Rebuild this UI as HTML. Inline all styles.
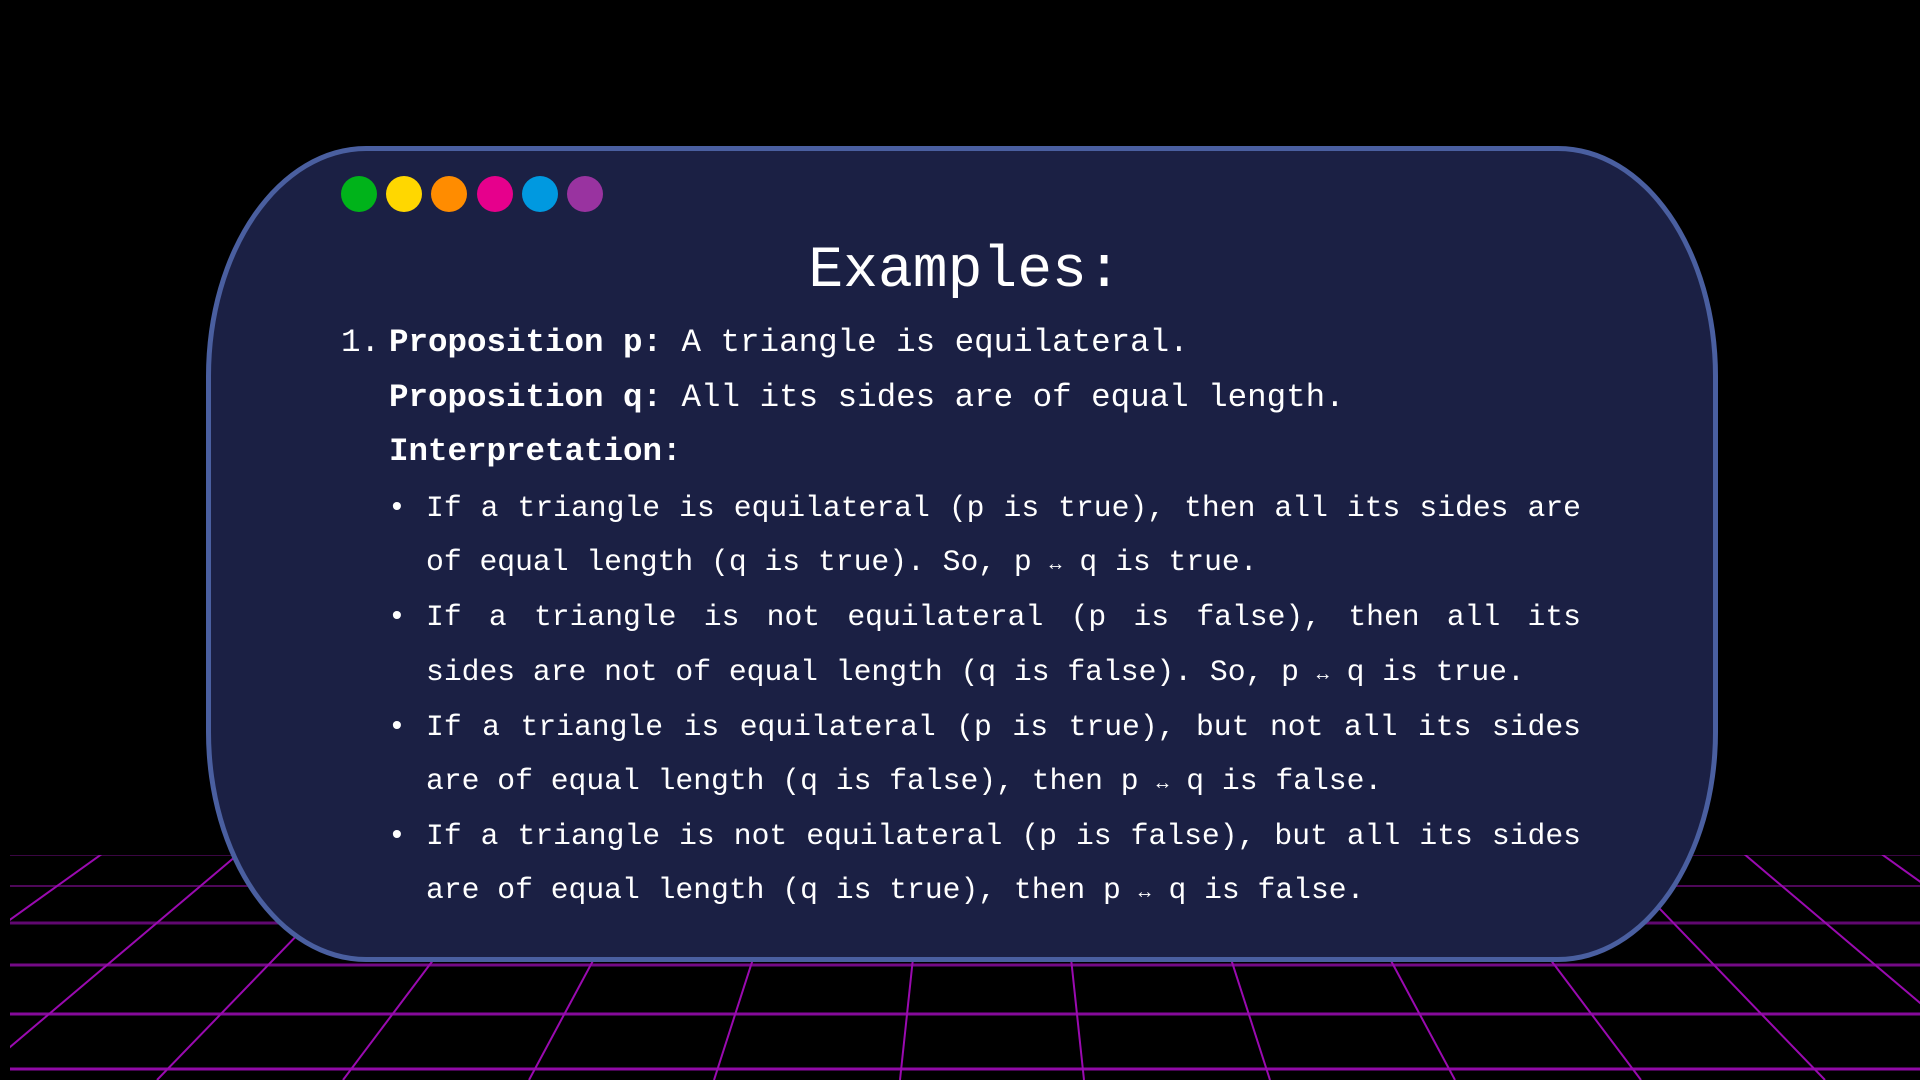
<!DOCTYPE html>
<html><head><meta charset="utf-8"><style>
html,body{margin:0;padding:0;background:#000;width:1920px;height:1080px;overflow:hidden;position:relative;font-family:"Liberation Mono","DejaVu Sans Mono",monospace;color:#fff}
svg.grid{position:absolute;left:0;top:0}
.card{position:absolute;left:206px;top:146px;width:1502px;height:806px;background:#1b2044;border:5px solid #4a5fa0;border-radius:160px/230px}
.dot{position:absolute;top:176px;width:36px;height:36px;border-radius:50%}
.title{position:absolute;left:0;width:1930px;text-align:center;top:243px;font-size:58px;line-height:58px}
.l{position:absolute;white-space:pre;font-size:32.5px;line-height:54.6px}
.b{position:absolute;font-size:29.7px;line-height:54.6px;white-space:nowrap}
.j{width:1155px;text-align:justify;text-align-last:justify;white-space:normal}
.ar{font-size:20px}
</style></head><body>
<svg class="grid" width="1920" height="1080">
<defs><clipPath id="c"><rect x="10" y="855" width="1910" height="225"/></clipPath></defs>
<g clip-path="url(#c)" stroke="#8a0a9a" stroke-width="2">
<line x1="10" y1="855" x2="1920" y2="855" stroke="#3a0642"/>
<line x1="10" y1="886" x2="1920" y2="886" stroke="#4e0859"/>
<line x1="10" y1="923" x2="1920" y2="923" stroke="#600870" stroke-width="3"/>
<line x1="10" y1="965" x2="1920" y2="965" stroke="#740a86" stroke-width="3"/>
<line x1="10" y1="1014" x2="1920" y2="1014" stroke="#850a9a" stroke-width="3"/>
<line x1="10" y1="1069" x2="1920" y2="1069" stroke="#900aa6" stroke-width="3"/>
<g stroke="#9a0ab0">
<line x1="992" y1="217" x2="-400" y2="1080"/>
<line x1="992" y1="217" x2="-214" y2="1080"/>
<line x1="992" y1="217" x2="-29" y2="1080"/>
<line x1="992" y1="217" x2="157" y2="1080"/>
<line x1="992" y1="217" x2="343" y2="1080"/>
<line x1="992" y1="217" x2="529" y2="1080"/>
<line x1="992" y1="217" x2="714" y2="1080"/>
<line x1="992" y1="217" x2="900" y2="1080"/>
<line x1="992" y1="217" x2="1084" y2="1080"/>
<line x1="992" y1="217" x2="1270" y2="1080"/>
<line x1="992" y1="217" x2="1455" y2="1080"/>
<line x1="992" y1="217" x2="1641" y2="1080"/>
<line x1="992" y1="217" x2="1825" y2="1080"/>
<line x1="992" y1="217" x2="2011" y2="1080"/>
<line x1="992" y1="217" x2="2197" y2="1080"/>
<line x1="992" y1="217" x2="2383" y2="1080"/>
</g></g></svg>
<div class="card"></div>
<div class="dot" style="left:341px;background:#00b31a"></div>
<div class="dot" style="left:386px;background:#ffd700"></div>
<div class="dot" style="left:431px;background:#ff8c00"></div>
<div class="dot" style="left:477px;background:#e6008c"></div>
<div class="dot" style="left:522px;background:#0099e0"></div>
<div class="dot" style="left:567px;background:#9933a0"></div>
<div class="title">Examples:</div>
<div class="l" style="left:341px;top:316px">1.</div>
<div class="l" style="left:389px;top:316px"><b>Proposition p:</b> A triangle is equilateral.</div>
<div class="l" style="left:389px;top:371px"><b>Proposition q:</b> All its sides are of equal length.</div>
<div class="l" style="left:389px;top:425px"><b>Interpretation:</b></div>
<div class="b" style="left:388px;top:481px">•</div>
<div class="b" style="left:388px;top:590px">•</div>
<div class="b" style="left:388px;top:700px">•</div>
<div class="b" style="left:388px;top:809px">•</div>
<div class="b j" style="left:426px;top:481px">If a triangle is equilateral (p is true), then all its sides are</div>
<div class="b" style="left:426px;top:535px">of equal length (q is true). So, p <span class="ar">↔</span> q is true.</div>
<div class="b j" style="left:426px;top:590px">If a triangle is not equilateral (p is false), then all its</div>
<div class="b" style="left:426px;top:645px">sides are not of equal length (q is false). So, p <span class="ar">↔</span> q is true.</div>
<div class="b j" style="left:426px;top:700px">If a triangle is equilateral (p is true), but not all its sides</div>
<div class="b" style="left:426px;top:754px">are of equal length (q is false), then p <span class="ar">↔</span> q is false.</div>
<div class="b j" style="left:426px;top:809px">If a triangle is not equilateral (p is false), but all its sides</div>
<div class="b" style="left:426px;top:863px">are of equal length (q is true), then p <span class="ar">↔</span> q is false.</div>
</body></html>
